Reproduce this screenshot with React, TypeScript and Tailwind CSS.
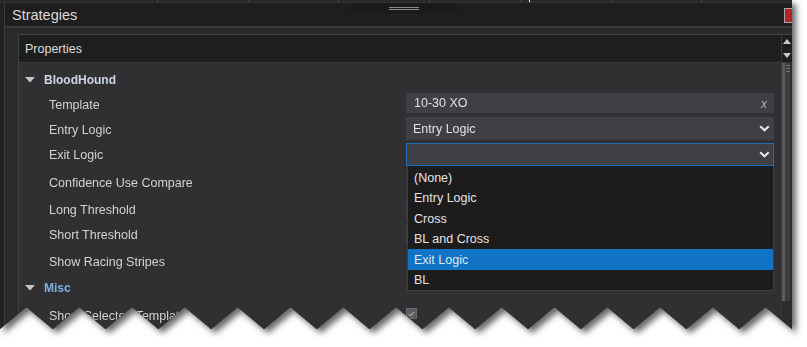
import React from 'react'

// torn bottom edge of the screenshot
const W = 792
const P = 52.8
const tornClip = (() => {
  const pts: string[] = ['0px 0px', `${W}px 0px`, `${W}px 329px`]
  for (let k = 14; k >= 0; k--) {
    pts.push(`${(k * P + P / 2).toFixed(1)}px 307px`)
    pts.push(`${(k * P).toFixed(1)}px 329px`)
  }
  return `polygon(${pts.join(',')})`
})()

const items = ['(None)', 'Entry Logic', 'Cross', 'BL and Cross', 'Exit Logic', 'BL']

function Chevron() {
  return (
    <svg width="11" height="7" viewBox="0 0 11 7" className="shrink-0">
      <path d="M1.2 1.2 L5.5 5.3 L9.8 1.2" fill="none" stroke="#e6e6e6" strokeWidth="2.1" />
    </svg>
  )
}

function Caret() {
  return (
    <svg width="10" height="6" viewBox="0 0 10 6" className="shrink-0">
      <path d="M0 0 H10 L5 5.5 Z" fill="#c4c4c4" />
    </svg>
  )
}

function Label({ children }: { children: React.ReactNode }) {
  return (
    <div className="w-[387px] shrink-0 pl-[30px] pt-[2px] flex items-center text-[12.5px] text-[#d2d2d2]">
      {children}
    </div>
  )
}

export default function App() {
  return (
    <div className="w-[807px] h-[347px] bg-white overflow-hidden font-['Liberation_Sans',Arial,sans-serif]">
      <div className="w-[792px] h-[330px] [filter:drop-shadow(4px_4px_3px_rgba(0,0,0,0.6))]">
        <div className="w-full h-full flex flex-col bg-[#232323]" style={{ clipPath: tornClip }}>
          {/* tab strip */}
          <div className="h-[3px] shrink-0 flex pl-[157px] bg-[#282828] border-b border-[#333]">
            {[0, 1, 2, 3, 4, 5, 6].map((i) => (
              <div key={i} className="w-[100px] h-full border-l border-[#444] relative">
                {i === 4 && <div className="absolute left-[8px] top-0 w-px h-full bg-white" />}
              </div>
            ))}
          </div>

          <div className="flex-1 flex">
            <div className="w-[4px] shrink-0 bg-[#232323]" />
            <div className="flex-1 flex flex-col border-l border-[#3c3c3c]">
              {/* title bar */}
              <div className="h-[23px] shrink-0 relative bg-[#1e1e1e] pl-[7px] pt-[2px] flex items-center">
                <span className="text-[14.5px] text-[#dadada]">Strategies</span>
                <div className="absolute left-[345px] top-0 w-[108px] h-[10px] bg-[#1a1a1a]">
                  <div className="absolute left-[39px] top-[4px] w-[30px] h-px bg-[#8a8a8a]" />
                  <div className="absolute left-[39px] top-[6px] w-[30px] h-px bg-[#8a8a8a]" />
                </div>
                <div className="absolute right-0 top-[5px] w-[8px] h-[15px] bg-[#b3232a] border border-r-0 border-[#a8a8a8]" />
              </div>
              <div className="h-[2px] shrink-0 bg-[#3b3b3b]" />

              {/* body */}
              <div className="flex-1 flex bg-[#2b2b2b] pt-[6px] pl-[13px]">
                <div className="flex-1 flex border-l border-t border-[#414141]">
                  <div className="flex-1 flex flex-col">
                    <div className="h-[28px] shrink-0 bg-[#1e1e1e] border-b border-[#3a3a3a] pl-[6px] pt-[2px] flex items-center text-[12.5px] text-[#dcdcdc]">
                      Properties
                    </div>

                    <div className="flex-1 bg-[#303033] pr-[7px]">
                      {/* BloodHound */}
                      <div className="h-[29px] pt-[5px] flex items-center gap-[9px] pl-[6px]">
                        <Caret />
                        <span className="text-[12px] font-bold text-[#cdd6e2]">BloodHound</span>
                      </div>

                      <div className="h-[25px] flex">
                        <Label>Template</Label>
                        <div className="mt-[1px] h-[20px] flex-1 bg-[#3f3f46] flex items-center justify-between pl-[8px] pr-[7px] pt-[1px] text-[12.5px] text-[#e2e2e2]">
                          <span>10-30 XO</span>
                          <span className="italic text-[#b4b4b4] text-[12px]">x</span>
                        </div>
                      </div>

                      <div className="h-[25px] flex">
                        <Label>Entry Logic</Label>
                        <div className="h-[23px] flex-1 bg-[#3f3f46] flex items-center justify-between pl-[7px] pr-[4px] text-[12.5px] text-[#e2e2e2]">
                          <span className="pt-[2px]">Entry Logic</span>
                          <Chevron />
                        </div>
                      </div>

                      <div className="h-[24px] flex">
                        <Label>Exit Logic</Label>
                        <div className="mt-[1px] h-[23px] flex-1 relative z-10 bg-[#3f3f46] border border-[#1f6cbd] flex items-center justify-end pr-[3px]">
                          <Chevron />
                          <div className="absolute top-[22px] left-0 w-[367px] bg-[#1c1c1c] border-x border-b border-[#3e3e3e] pt-px">
                            {items.map((it) => (
                              <div
                                key={it}
                                className={`h-[20.5px] pl-[6px] pt-[2px] flex items-center text-[12.5px] ${
                                  it === 'Exit Logic' ? 'bg-[#1173c6] text-[#dce9f6]' : 'text-[#e4e4e4]'
                                }`}
                              >
                                {it}
                              </div>
                            ))}
                          </div>
                        </div>
                      </div>

                      <div className="h-[33px] flex">
                        <Label>Confidence Use Compare</Label>
                      </div>
                      <div className="h-[20px] flex">
                        <Label>Long Threshold</Label>
                        <div className="h-[20px] flex-1 bg-[#3f3f46]" />
                      </div>
                      <div className="h-[30px] flex">
                        <Label>Short Threshold</Label>
                        <div className="mt-[5px] h-[20px] flex-1 bg-[#3f3f46]" />
                      </div>
                      <div className="h-[24px] flex">
                        <Label>Show Racing Stripes</Label>
                      </div>

                      {/* Misc */}
                      <div className="h-[28px] pt-[2px] flex items-center gap-[9px] pl-[6px]">
                        <Caret />
                        <span className="text-[12px] font-bold text-[#7eaee0]">Misc</span>
                      </div>

                      <div className="h-[28px] flex">
                        <Label>Show Selected Template</Label>
                        <div className="mt-[7px] w-[11px] h-[11px] bg-[#5a5a5e] border border-[#6a6a6e] flex items-center justify-center">
                          <svg width="7" height="6" viewBox="0 0 7 6">
                            <path d="M0.8 3 L2.7 4.8 L6.2 0.8" fill="none" stroke="#9a9a9a" strokeWidth="1.3" />
                          </svg>
                        </div>
                      </div>
                    </div>
                  </div>

                  {/* scrollbar */}
                  <div className="w-[11px] shrink-0 flex flex-col border-l border-[#3a3a3a] bg-[#2c2c2c]">
                    <div className="h-[28px] shrink-0 bg-[#1e1e1e] border-b border-[#333] flex flex-col items-end pr-[1px] pt-[4px] gap-[9px]">
                      <svg width="8" height="5" viewBox="0 0 8 5">
                        <path d="M0 5 L4 0 L8 5 Z" fill="#c8c8c8" />
                      </svg>
                      <svg width="8" height="5" viewBox="0 0 8 5">
                        <path d="M0 0 L8 0 L4 5 Z" fill="#c8c8c8" />
                      </svg>
                    </div>
                    <div className="h-[238px] shrink-0 flex bg-[#3d3d3f]">
                      <div className="w-[3px] bg-[#5c5c5e]" />
                      <div className="flex-1 flex flex-col gap-[2px] pt-[2px] pl-[1px]">
                        <div className="h-px bg-[#777]" />
                        <div className="h-px bg-[#777]" />
                        <div className="h-px bg-[#777]" />
                      </div>
                      <div className="w-[2px] bg-[#2e2e2e]" />
                    </div>
                  </div>
                </div>
              </div>
            </div>
          </div>
        </div>
      </div>
    </div>
  )
}
